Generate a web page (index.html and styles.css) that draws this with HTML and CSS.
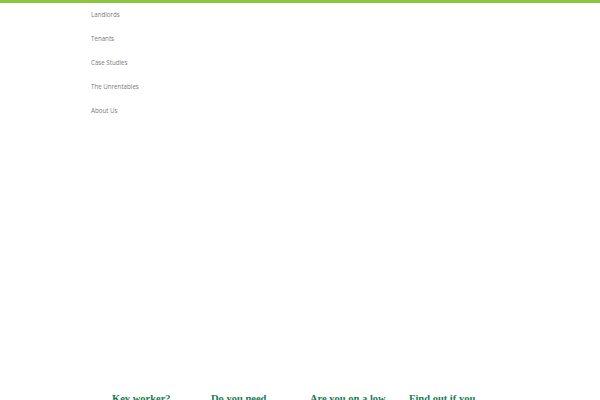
FILE: index.html
```html
<!DOCTYPE html>
<html>
<head>
<meta charset="utf-8">
<link rel="stylesheet" href="styles.css">
</head>
<body>
<div class="topbar"></div>
<nav class="menu">
  <a href="#">Landlords</a>
  <a href="#">Tenants</a>
  <a href="#">Case Studies</a>
  <a href="#">The Unrentables</a>
  <a href="#">About Us</a>
</nav>
<div class="spacer"></div>
<section class="cards">
  <h3>Key worker?</h3>
  <h3>Do you need</h3>
  <h3>Are you on a low</h3>
  <h3>Find out if you</h3>
</section>
</body>
</html>
```
FILE: styles.css
```css
html, body { margin: 0; padding: 0; background: #fff; overflow: hidden; }
body { width: 600px; height: 400px; }
.topbar { height: 3px; background: #8cc63f; }
.menu { display: flex; flex-direction: column; padding-left: 91px; }
.menu a { display: block; height: 24px; line-height: 23px; font-family: "Open Sans", sans-serif; font-size: 6.2px; color: #7a7a7a; text-decoration: none; }
.spacer { height: 269px; }
.cards { display: grid; grid-template-columns: repeat(4, 99px); padding-left: 112px; }
.cards h3 { margin: 0; font-family: "Liberation Serif", serif; font-weight: bold; font-size: 10.5px; color: #1b7a50; line-height: 14px; white-space: nowrap; }
```
